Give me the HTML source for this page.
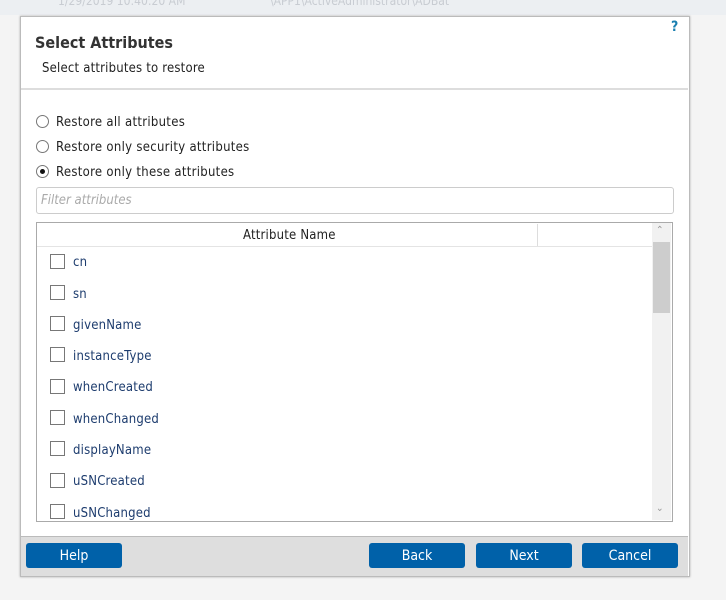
<!DOCTYPE html>
<html><head><style>
body{margin:0;width:726px;height:600px;background:#f4f4f4;font-family:"DejaVu Sans Condensed","Liberation Sans",sans-serif;position:relative;overflow:hidden;color:#222}
.abs{position:absolute}
.dlg{left:20px;top:16px;width:668px;height:559px;background:#fff;border:1px solid #bbb;box-shadow:0 0 2px #aaa}
.btn{position:absolute;top:543px;height:25px;width:96px;background:#0061a9;color:#fff;border-radius:3px;font-size:14px;text-align:center;line-height:27px}
.radio{position:absolute;left:36px;width:11px;height:11px;border:1px solid #777;border-radius:50%;background:#fff}
.rl{position:absolute;left:56px;font-size:13px;letter-spacing:0.3px}
.cb{position:absolute;left:50px;width:13px;height:13px;border:1px solid #777;background:#fff}
.cl{position:absolute;left:73px;font-size:13px;color:#1d3c6e;letter-spacing:0.2px}
</style></head><body>
<div class="abs" style="left:0;top:0;width:726px;height:15px;background:#eceff2"></div>
<div class="abs" style="left:58px;top:-6px;font-size:12px;color:#c8ccd2">1/29/2019 10:40:20 AM</div>
<div class="abs" style="left:270px;top:-6px;font-size:12px;color:#c8ccd2">\APP1\ActiveAdministrator\ADBat</div>
<div class="abs dlg"></div>
<div class="abs" style="left:671px;top:19px;font-size:14px;font-weight:bold;color:#1a7fb0">?</div>
<div class="abs" style="left:35px;top:33px;font-size:16px;font-weight:bold;color:#333">Select Attributes</div>
<div class="abs" style="left:42px;top:61px;font-size:13px;letter-spacing:0.2px">Select attributes to restore</div>
<div class="abs" style="left:21px;top:88px;width:667px;height:2px;background:#ddd"></div>
<div class="radio" style="top:115px"></div><div class="rl" style="top:115px">Restore all attributes</div>
<div class="radio" style="top:140px"></div><div class="rl" style="top:140px">Restore only security attributes</div>
<div class="radio" style="top:165px"><div style="position:absolute;left:3px;top:3px;width:5px;height:5px;border-radius:50%;background:#111"></div></div><div class="rl" style="top:165px">Restore only these attributes</div>
<div class="abs" style="left:36px;top:187px;width:636px;height:25px;border:1px solid #ccc;border-radius:3px"></div>
<div class="abs" style="left:41px;top:193px;font-size:13px;font-style:italic;color:#aaa">Filter attributes</div>
<div class="abs" style="left:36px;top:222px;width:635px;height:298px;border:1px solid #aaa"></div>
<div class="abs" style="left:37px;top:246px;width:615px;height:1px;background:#e4e4e4"></div>
<div class="abs" style="left:537px;top:224px;width:1px;height:22px;background:#ddd"></div>
<div class="abs" style="left:243px;top:228px;font-size:13px;letter-spacing:0.2px">Attribute Name</div>
<div class="abs" style="left:652px;top:223px;width:19px;height:297px;background:#f1f1f1"></div>
<div class="abs" style="left:653px;top:242px;width:17px;height:71px;background:#cdcdcd"></div>
<div class="abs" style="left:656px;top:225px;font-size:10px;color:#999">&#8963;</div>
<div class="abs" style="left:656px;top:503px;font-size:10px;color:#999">&#8964;</div>
<div class="cb" style="top:254px"></div><div class="cl" style="top:255px">cn</div>
<div class="cb" style="top:285px"></div><div class="cl" style="top:287px">sn</div>
<div class="cb" style="top:316px"></div><div class="cl" style="top:318px">givenName</div>
<div class="cb" style="top:347px"></div><div class="cl" style="top:349px">instanceType</div>
<div class="cb" style="top:379px"></div><div class="cl" style="top:380px">whenCreated</div>
<div class="cb" style="top:410px"></div><div class="cl" style="top:412px">whenChanged</div>
<div class="cb" style="top:441px"></div><div class="cl" style="top:443px">displayName</div>
<div class="cb" style="top:473px"></div><div class="cl" style="top:474px">uSNCreated</div>
<div class="cb" style="top:504px"></div><div class="cl" style="top:506px">uSNChanged</div>
<div class="abs" style="left:21px;top:536px;width:667px;height:39px;background:#dedede;border-top:1px solid #bbb"></div>
<div class="btn" style="left:26px">Help</div>
<div class="btn" style="left:369px">Back</div>
<div class="btn" style="left:476px">Next</div>
<div class="btn" style="left:582px">Cancel</div>
</body></html>
